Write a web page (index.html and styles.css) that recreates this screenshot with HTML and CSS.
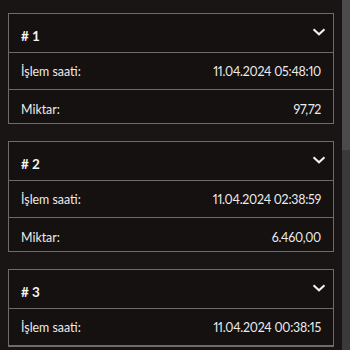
FILE: index.html
```html
<!DOCTYPE html>
<html lang="tr">
<head>
    <meta charset="UTF-8">
    <meta name="viewport" content="width=device-width, initial-scale=1.0">
    <title>İşlemler</title>
    <link rel="stylesheet" href="styles.css">
</head>
<body>
    <div class="viewport">
        <div class="list">
            <div class="card">
                <div class="card-head">
                    <span class="card-title"># 1</span>
                    <svg class="chevron" width="14" height="8" viewBox="0 0 14 8"><polyline points="1.5,1.2 7,6.3 12.5,1.2" fill="none" stroke="#f2f2f2" stroke-width="2"/></svg>
                </div>
                <div class="row"><span>İşlem saati:</span><span class="value">11.04.2024 05:48:10</span></div>
                <div class="row last"><span>Miktar:</span><span class="value">97,72</span></div>
            </div>
            <div class="card">
                <div class="card-head">
                    <span class="card-title"># 2</span>
                    <svg class="chevron" width="14" height="8" viewBox="0 0 14 8"><polyline points="1.5,1.2 7,6.3 12.5,1.2" fill="none" stroke="#f2f2f2" stroke-width="2"/></svg>
                </div>
                <div class="row"><span>İşlem saati:</span><span class="value">11.04.2024 02:38:59</span></div>
                <div class="row last"><span>Miktar:</span><span class="value">6.460,00</span></div>
            </div>
            <div class="card">
                <div class="card-head">
                    <span class="card-title"># 3</span>
                    <svg class="chevron" width="14" height="8" viewBox="0 0 14 8"><polyline points="1.5,1.2 7,6.3 12.5,1.2" fill="none" stroke="#f2f2f2" stroke-width="2"/></svg>
                </div>
                <div class="row"><span>İşlem saati:</span><span class="value">11.04.2024 00:38:15</span></div>
            </div>
        </div>
    </div>
    <div class="scrollbar">
        <div class="thumb"></div>
    </div>
</body>
</html>
```

FILE: styles.css
```css
html {
    background-color: #181514;
}

body {
    display: flex;
    height: 350px;
    margin: 0;
    overflow: hidden;
    font-family: Lato, "Noto Sans", sans-serif;
    font-size: 12.4px;
    color: #ececec;
}

.viewport {
    flex: 1;
    padding: 13px 8px 0;
    overflow: hidden;
}

.scrollbar {
    width: 8px;
    background-color: #3a3a3a;
}

.thumb {
    height: 150px;
    background-color: #4b4b4b;
}

.list {
    display: flex;
    flex-direction: column;
    gap: 17px;
}

.card {
    border: 1px solid #6f6b69;
    background-color: #141110;
}

.card-head {
    display: flex;
    justify-content: space-between;
    align-items: flex-start;
    height: 38px;
    padding: 0 12px;
    border-bottom: 1px solid #6f6b69;
}

.card-title {
    padding-top: 14px;
    font-size: 13.5px;
    font-weight: bold;
    color: #f4f4f4;
}

.chevron {
    margin-top: 14px;
    margin-right: -5px;
}

.row {
    display: flex;
    justify-content: space-between;
    height: 37px;
    padding: 11px 12px 0;
    box-sizing: border-box;
    border-bottom: 1px solid #6f6b69;
}

.row.last {
    height: 33px;
    padding-top: 12px;
    border-bottom: none;
}

.value {
    font-variant-numeric: proportional-nums;
    letter-spacing: -0.25px;
}
```
